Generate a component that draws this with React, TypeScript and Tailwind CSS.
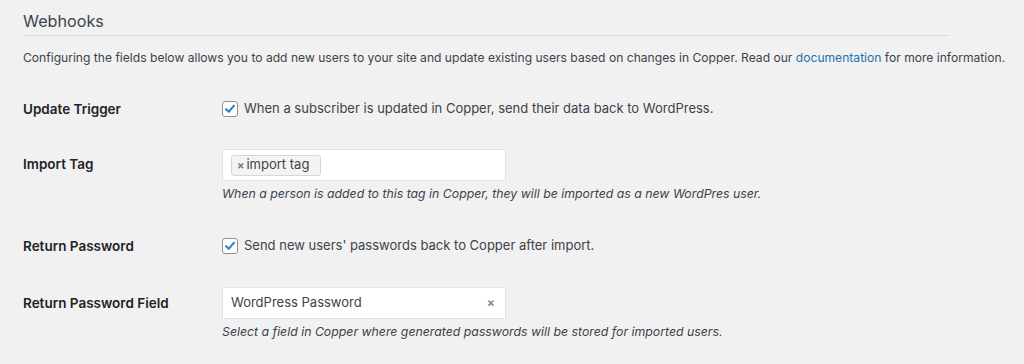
import React from "react";

function Check() {
  return (
    <span className="flex h-4 w-4 shrink-0 items-center justify-center rounded-[3px] border border-[#8c8f94] bg-white">
      <svg viewBox="0 0 16 16" className="h-[14px] w-[14px]">
        <path d="M3.5 8.2 L6.6 11.2 L12.6 4.2" fill="none" stroke="#2a86c4" strokeWidth="2.4" strokeLinecap="round" strokeLinejoin="round" />
      </svg>
    </span>
  );
}

export default function App() {
  return (
    <div className="h-[364px] w-[1024px] overflow-hidden bg-[#f1f1f1] text-[#3c434a]" style={{ fontFamily: "Inter, 'Noto Sans', sans-serif" }}>
      <div className="pl-[23px] pr-[75px] pt-[11px]">
        <h2 className="text-[16.2px] leading-[20px] font-normal text-[#3c434a]">Webhooks</h2>
        <div className="mt-[4px] h-px w-[926px] bg-[#dcdcde]" />
      </div>
      <p className="pl-[23px] pt-[13px] text-[12.1px] leading-[18px] whitespace-nowrap">
        Configuring the fields below allows you to add new users to your site and update existing users based on changes in Copper. Read our{" "}
        <span className="text-[#2271b1]">documentation</span> for more information.
      </p>
      <div className="pl-[23px]">
        <div className="flex h-[32px] items-center mt-[26px]">
          <div className="w-[199px] text-[13.5px] font-semibold text-[#1d2327]">Update Trigger</div>
          <div className="flex items-center gap-[6px] text-[13px]">
            <Check />
            <span>When a subscriber is updated in Copper, send their data back to WordPress.</span>
          </div>
        </div>
        <div className="flex mt-[24px]">
          <div className="w-[199px] pt-[5px] text-[13.5px] font-semibold text-[#1d2327]">Import Tag</div>
          <div>
            <div className="flex h-[32px] w-[284px] items-center border border-[#e4e4e4] bg-white px-[8px]">
              <span className="flex h-[21px] items-center rounded-[3px] border border-[#d7d7d7] bg-[#f3f3f3] pl-[5px] pr-[11px] text-[13px]">
                <span className="mr-[2px] text-[11px] font-bold text-[#777]">×</span>import tag
              </span>
            </div>
            <div className="mt-[4px] text-[12.3px] italic leading-[18px] text-[#3c434a]">
              When a person is added to this tag in Copper, they will be imported as a new WordPres user.
            </div>
          </div>
        </div>
        <div className="flex h-[32px] items-center mt-[27px]">
          <div className="w-[199px] text-[13.5px] font-semibold text-[#1d2327]">Return Password</div>
          <div className="flex items-center gap-[6px] text-[13px]">
            <Check />
            <span>Send new users' passwords back to Copper after import.</span>
          </div>
        </div>
        <div className="flex mt-[25px]">
          <div className="w-[199px] pt-[6px] text-[13.5px] font-semibold text-[#1d2327]">Return Password Field</div>
          <div>
            <div className="flex h-[32px] w-[284px] items-center justify-between border border-[#e4e4e4] bg-white pl-[8px] pr-[10px] text-[13px]">
              <span>WordPress Password</span>
              <span className="text-[12px] font-bold text-[#888]">×</span>
            </div>
            <div className="mt-[4px] text-[12.3px] italic leading-[18px] text-[#3c434a]">
              Select a field in Copper where generated passwords will be stored for imported users.
            </div>
          </div>
        </div>
      </div>
    </div>
  );
}
